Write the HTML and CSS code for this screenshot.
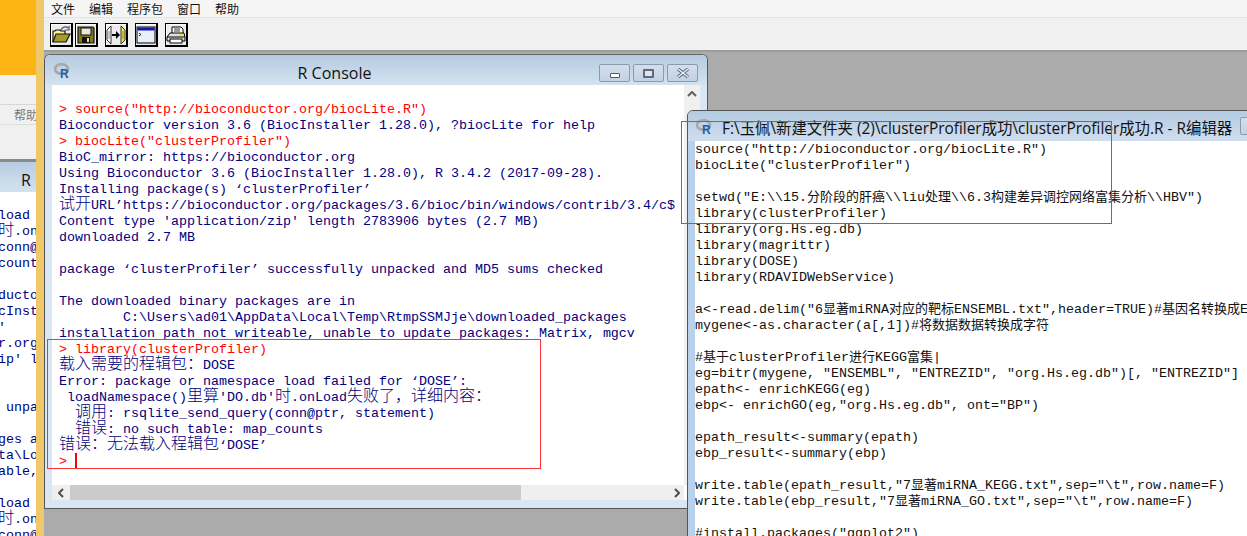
FILE: index.html
```html
<!DOCTYPE html>
<html lang="zh">
<head>
<meta charset="utf-8">
<title>R Console</title>
<link rel="stylesheet" href="styles.css">
</head>
<body>
<div class="desktop">
  <div class="bg-left">
    <div class="orange"></div>
    <div class="grey-band"></div>
    <div class="help-band">帮助</div>
    <div class="gap-band"></div>
    <div class="back-title">R</div>
<pre class="back-text">load
<span class="c">时</span>.on
conn@
count

ducto
cInst
'
r.org
ip' l


 unpa

ges a
ta\Lo
able,

load
<span class="c">时</span>.on
conn@</pre>
  </div>
  <div class="yellow-strip"></div>
  <div class="app">
    <nav class="menu">
      <span>文件</span><span>编辑</span><span>程序包</span><span>窗口</span><span>帮助</span>
    </nav>
    <div class="toolbar">
      <button class="tool" aria-label="打开">
        <svg viewBox="0 0 20 20" width="20" height="20"><path d="M2 17V6h2l1-1h4l1 1h4v3" fill="#f8f0a0" stroke="#111" stroke-width="1.200"/><path d="M2 17l3-8h14l-4 8z" fill="#a89c28" stroke="#111" stroke-width="1.200"/><path d="M10 5c1-3 5-4 7-2" fill="none" stroke="#555" stroke-width="1.200"/><path d="M18 1v4h-4" fill="none" stroke="#555" stroke-width="1.200"/></svg>
      </button>
      <button class="tool" aria-label="保存">
        <svg viewBox="0 0 20 20" width="20" height="20"><path d="M2 2h15l1 1v15H2z" fill="#80791c" stroke="#111" stroke-width="1.200"/><rect x="5" y="3" width="10" height="7" fill="#e8e8d8" stroke="#111"/><rect x="6" y="12" width="8" height="6" fill="#111"/><rect x="11" y="13" width="2" height="4" fill="#ddd"/></svg>
      </button>
      <button class="tool tool-gap" aria-label="加载">
        <svg viewBox="0 0 20 20" width="20" height="20"><path d="M1 5l4-4v18l-4-4z" fill="#fff" stroke="#333"/><path d="M19 5l-4-4v18l4-4z" fill="#f4e04a" stroke="#333"/><path d="M3 6v8" stroke="#888"/><path d="M17 6v8" stroke="#a09030"/><path d="M6 10h5" stroke="#000" stroke-width="2"/><path d="M10 6l4 4-4 4z"/></svg>
      </button>
      <button class="tool tool-gap" aria-label="控制台">
        <svg viewBox="0 0 20 20" width="20" height="20"><rect x="1" y="2" width="18" height="16" fill="#e8f0f8" stroke="#000"/><rect x="1.500" y="2.500" width="17" height="3" fill="#1414b0"/><path d="M3 8l2 1.500-2 1.500" fill="none" stroke="#000" stroke-width=".8"/></svg>
      </button>
      <button class="tool tool-gap" aria-label="打印">
        <svg viewBox="0 0 20 20" width="20" height="20"><path d="M6 8V2h9l2 2v4" fill="#fff" stroke="#000"/><path d="M8 4h6M8 6h6" stroke="#000" stroke-width=".8"/><path d="M1 12l3-4h14l1 4v4H1z" fill="#e0e0e0" stroke="#000"/><path d="M1 12h18" stroke="#000"/><rect x="13" y="9" width="4" height="2" fill="#f4e04a"/><rect x="4" y="14" width="12" height="4" fill="#fff" stroke="#000"/></svg>
      </button>
    </div>
    <div class="mdi"></div>
  </div>

  <section class="window console">
    <header class="titlebar">
      <svg class="rlogo" viewBox="0 0 17 15" width="17" height="15"><ellipse cx="7.500" cy="6" rx="6.500" ry="4.800" fill="none" stroke="#a3a9b0" stroke-width="2.600"/><text x="6" y="14.800" class="rlogo-r">R</text></svg>
      <h1 class="title title-center">R Console</h1>
      <div class="controls">
        <span class="ctl"><i class="ic-min"></i></span>
        <span class="ctl"><i class="ic-max"></i></span>
        <span class="ctl"><svg viewBox="0 0 14 10" width="14" height="10"><path d="M2 1l10 8M12 1L2 9" stroke="#5c6a7a" stroke-width="3.400" fill="none"/><path d="M2 1l10 8M12 1L2 9" stroke="#e8eef5" stroke-width="1.600" fill="none"/></svg></span>
      </div>
    </header>
    <div class="client">
      <div class="viewport">
<pre class="log"><span class="in">&gt; source("http://bioconductor.org/biocLite.R")</span>
Bioconductor version 3.6 (BiocInstaller 1.28.0), ?biocLite for help
<span class="in">&gt; biocLite("clusterProfiler")</span>
BioC_mirror: https://bioconductor.org
Using Bioconductor 3.6 (BiocInstaller 1.28.0), R 3.4.2 (2017-09-28).
Installing package(s) ‘clusterProfiler’
<span class="c">试开</span>URL’https://bioconductor.org/packages/3.6/bioc/bin/windows/contrib/3.4/c$
Content type 'application/zip' length 2783906 bytes (2.7 MB)
downloaded 2.7 MB

package ‘clusterProfiler’ successfully unpacked and MD5 sums checked

The downloaded binary packages are in
        C:\Users\ad01\AppData\Local\Temp\RtmpSSMJje\downloaded_packages
installation path not writeable, unable to update packages: Matrix, mgcv
<span class="in">&gt; library(clusterProfiler)</span>
<span class="c">载入需要的程辑包：</span>DOSE
Error: package or namespace load failed for ‘DOSE’:
 loadNamespace()<span class="c">里算</span>'DO.db'<span class="c">时</span>.onLoad<span class="c">失败了，详细内容：</span>
  <span class="c">调用</span>: rsqlite_send_query(conn@ptr, statement)
  <span class="c">错误</span>: no such table: map_counts
<span class="c">错误：无法载入程辑包</span>‘DOSE’
<span class="in">&gt; </span><span class="caret"></span></pre>
        <div class="vscroll"><svg viewBox="0 0 10 6" width="10" height="6"><path d="M1 5l4-4 4 4" fill="none" stroke="#606060" stroke-width="2"/></svg></div>
      </div>
      <div class="hscroll">
        <svg class="arrow" viewBox="0 0 6 10" width="6" height="10"><path d="M5 1L1 5l4 4" fill="none" stroke="#505050" stroke-width="2"/></svg>
        <div class="thumb"></div>
        <svg class="arrow arrow-r" viewBox="0 0 6 10" width="6" height="10"><path d="M1 1l4 4-4 4" fill="none" stroke="#505050" stroke-width="2"/></svg>
      </div>
    </div>
  </section>

  <section class="window editor">
    <header class="titlebar titlebar-ed">
      <svg class="rlogo" viewBox="0 0 17 15" width="17" height="15"><ellipse cx="7.500" cy="6" rx="6.500" ry="4.800" fill="none" stroke="#a3a9b0" stroke-width="2.600"/><text x="6" y="14.800" class="rlogo-r">R</text></svg>
      <h1 class="title title-ed">F:\玉佩\新建文件夹 (2)\clusterProfiler成功\clusterProfiler成功.R - R编辑器</h1>
      <span class="ctl ctl-ed"></span>
    </header>
<pre class="code">source("http://bioconductor.org/biocLite.R")
biocLite("clusterProfiler")

setwd("E:\\15.<span class="c">分阶段的肝癌</span>\\liu<span class="c">处理</span>\\6.3<span class="c">构建差异调控网络富集分析</span>\\HBV")
library(clusterProfiler)
library(org.Hs.eg.db)
library(magrittr)
library(DOSE)
library(RDAVIDWebService)

a&lt;-read.delim("6<span class="c">显著</span>miRNA<span class="c">对应的靶标</span>ENSEMBL.txt",header=TRUE)#<span class="c">基因名转换成</span>E
mygene&lt;-as.character(a[,1])#<span class="c">将数据数据转换成字符</span>

#<span class="c">基于</span>clusterProfiler<span class="c">进行</span>KEGG<span class="c">富集</span>|
eg=bitr(mygene, "ENSEMBL", "ENTREZID", "org.Hs.eg.db")[, "ENTREZID"]
epath&lt;- enrichKEGG(eg)
ebp&lt;- enrichGO(eg,"org.Hs.eg.db", ont="BP")

epath_result&lt;-summary(epath)
ebp_result&lt;-summary(ebp)

write.table(epath_result,"7<span class="c">显著</span>miRNA_KEGG.txt",sep="\t",row.name=F)
write.table(ebp_result,"7<span class="c">显著</span>miRNA_GO.txt",sep="\t",row.name=F)

#install.packages("ggplot2")</pre>
  </section>

  <div class="note note-console"></div>
  <div class="note note-editor"></div>
</div>
</body>
</html>
```
FILE: styles.css
```css
* { box-sizing: border-box; }
html, body { margin: 0; padding: 0; }
body { width: 1247px; height: 536px; overflow: hidden; background: #ababab; }
pre { margin: 0; }

.desktop { position: relative; width: 1247px; height: 536px; overflow: hidden; font-family: "Liberation Mono", "Noto Sans CJK SC", monospace; }

.c { font-family: "Noto Sans CJK SC", sans-serif; font-size: 16px; font-weight: 300; line-height: 0; }

/* background window at far left */
.bg-left { position: absolute; left: 0; top: 0; width: 36px; height: 536px; overflow: hidden; background: #fff; display: flex; flex-direction: column; }
.orange { height: 75px; flex: none; background: #fdb515; }
.grey-band { height: 30px; flex: none; background: #f1f1f1; border-bottom: 1px solid #d8d8d8; }
.help-band { height: 20px; flex: none; background: #f0f0f0; color: #777; font: 12px/20px "Noto Sans CJK SC", sans-serif; padding-left: 14px; white-space: nowrap; border-bottom: 1px solid #ddd; }
.gap-band { height: 37px; flex: none; background: #f0f0f0; border-bottom: 3px solid #8a8a8a; }
.back-title { height: 30px; flex: none; background: linear-gradient(#b7cde2, #d4e2ef); font: 16px/36px "Open Sans", sans-serif; color: #111; padding-left: 21px; }
.back-text { flex: none; margin: 0 0 0 -2px; padding-top: 16px; font: 13.33px/16px "Liberation Mono", monospace; color: #000080; }

.yellow-strip { position: absolute; left: 36px; top: 0; width: 8px; height: 536px; background: #efc869; }

/* main R GUI frame */
.app { position: absolute; left: 44px; top: 0; right: 0; bottom: 0; background: #f3f3f3; display: flex; flex-direction: column; }
.menu { height: 17px; flex: none; display: flex; gap: 14px; padding-left: 7px; font: 12px/17px "Noto Sans CJK SC", sans-serif; color: #111; background: #f5f5f5; }
.toolbar { height: 35px; flex: none; display: flex; align-items: center; gap: 2px; padding: 2px 0 0 6px; border-top: 1px solid #e4e4e4; background: #f0f0f0; border-bottom: 2px solid #9c9c9c; }
.tool { width: 23px; height: 24px; padding: 0; border: 1px solid #000; border-right-width: 2px; border-bottom-width: 2px; background: #ececec; box-shadow: inset 1px 1px 0 #fff; display: flex; align-items: center; justify-content: center; }
.tool-gap { margin-left: 5px; }
.mdi { flex: 1; background: #ababab; }

/* windows */
.window { position: absolute; background: #d9e6f3; display: flex; flex-direction: column; }
.console { left: 44px; top: 54px; width: 664px; height: 455px; border: 1px solid #555; border-top-color: #666; border-radius: 6px 6px 0 0; }
.titlebar { height: 30px; flex: none; position: relative; display: flex; align-items: center; padding-left: 9px; background: linear-gradient(#b5cbe0, #d4e2f0); border-radius: 5px 5px 0 0; }
.rlogo { flex: none; }
.rlogo-r { font: bold 12px "Liberation Sans", sans-serif; fill: #1d5fa8; }
.title { margin: 0; padding-top: 5px; font: 400 16px/20px "Open Sans", "Noto Sans CJK SC", sans-serif; color: #111; white-space: nowrap; }
.title-center { flex: 1; text-align: center; padding-right: 109px; }
.controls { position: absolute; right: 9px; top: 9px; display: flex; gap: 3px; }
.ctl { width: 31px; height: 18px; border: 1px solid #8a99ab; border-radius: 2px; background: linear-gradient(#d3dfeb, #c2d2e3); display: flex; align-items: center; justify-content: center; }
.ic-min { display: block; width: 10px; height: 5px; border: 1px solid #556; border-radius: 1px; background: #fff; margin-top: 5px; }
.ic-max { display: block; width: 11px; height: 9px; border: 2px solid #667; border-radius: 1px; background: #dde6ee; }

.client { flex: 1; margin: 0 7px 8px 7px; display: flex; flex-direction: column; min-height: 0; background: #fff; }
.viewport { flex: 1; display: flex; min-height: 0; }
.log { flex: 1; min-width: 0; overflow: hidden; padding: 17px 0 0 7px; font: 13.33px/16px "Liberation Mono", monospace; color: #000080; background: #fff; }
.in { color: #ff0000; }
.caret { display: inline-block; width: 2px; height: 16px; background: #ff0000; vertical-align: top; margin-top: -1px; }
.vscroll { width: 16px; flex: none; background: #f0f0f0; display: flex; justify-content: center; padding-top: 6px; }
.hscroll { height: 15px; flex: none; display: flex; align-items: center; background: #efefef; margin-right: 16px; }
.arrow { flex: none; margin: 0 6px 0 6px; }
.thumb { width: 451px; height: 15px; background: #cbcbcb; }
.arrow-r { margin-left: auto; margin-right: 4px; }

.editor { left: 687px; top: 110px; width: 570px; height: 440px; border: 1px solid #555; border-radius: 6px 6px 0 0; background: #b9d1ea; }
.titlebar-ed { padding-left: 8px; height: 30px; background: linear-gradient(#b5cbe0, #cfdeee); }
.title-ed { margin-left: 9px; font-size: 15.4px; }
.ctl-ed { margin-left: 8px; flex: none; }
.code { flex: 1; margin-left: 7px; padding: 1px 0 0; background: #fff; color: #111; font: 13.33px/16px "Liberation Mono", monospace; overflow: hidden; }
.code .c { font-size: 13px; font-weight: 400; }

/* hand-drawn annotation rectangles */
.note { position: absolute; border: 1px solid #ff3030; pointer-events: none; }
.note-console { left: 47px; top: 339px; width: 494px; height: 130px; }
.note-editor { left: 681px; top: 121px; width: 431px; height: 103px; }
```
